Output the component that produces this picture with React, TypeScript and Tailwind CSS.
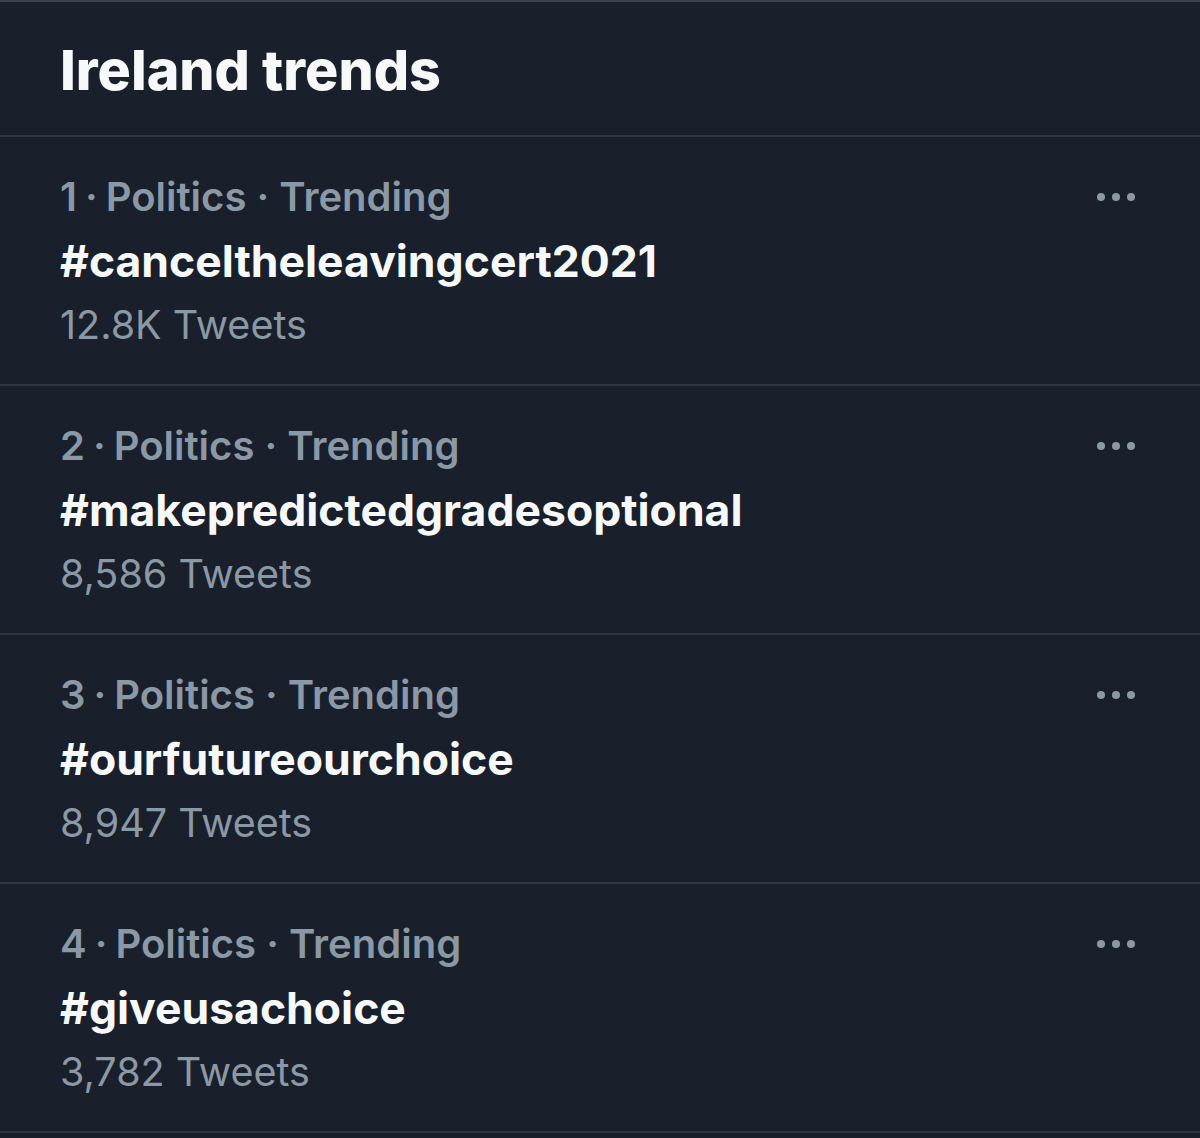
import React from "react";

const trends = [
  { n: 1, tag: "#canceltheleavingcert2021", count: "12.8K Tweets" },
  { n: 2, tag: "#makepredictedgradesoptional", count: "8,586 Tweets" },
  { n: 3, tag: "#ourfutureourchoice", count: "8,947 Tweets" },
  { n: 4, tag: "#giveusachoice", count: "3,782 Tweets" },
];

export default function App() {
  return (
    <div
      className="w-[1200px] h-[1138px] bg-[#19202b] border-t-2 border-[#3a414c] overflow-hidden"
      style={{ fontFamily: "Inter, 'Noto Sans', sans-serif" }}
    >
      <div className="h-[135px] border-b-2 border-[#2f3641] flex items-center pl-[60px]">
        <h1 className="text-[55.5px] font-extrabold text-[#f7f9f9] leading-none pt-[2px]">
          Ireland trends
        </h1>
      </div>
      {trends.map((t) => (
        <div
          key={t.n}
          className="h-[249px] border-b-2 border-[#2f3641] pl-[60px] pr-[65px] pt-[28px] flex justify-between"
        >
          <div className="flex flex-col">
            <div className="text-[40px] leading-[63px] font-semibold text-[#8b98a5]">
              {t.n}<span className="mx-[8px]">·</span>Politics · Trending
            </div>
            <div className="text-[44.5px] leading-[65px] font-bold text-[#f7f9f9] pt-[1px]">
              {t.tag}
            </div>
            <div className="text-[39.5px] leading-[62px] font-normal text-[#8b98a5]">
              {t.count}
            </div>
          </div>
          <div className="flex gap-[7px] pt-[28px]">
            <span className="w-[8px] h-[8px] rounded-full bg-[#8b98a5]" />
            <span className="w-[8px] h-[8px] rounded-full bg-[#8b98a5]" />
            <span className="w-[8px] h-[8px] rounded-full bg-[#8b98a5]" />
          </div>
        </div>
      ))}
    </div>
  );
}
